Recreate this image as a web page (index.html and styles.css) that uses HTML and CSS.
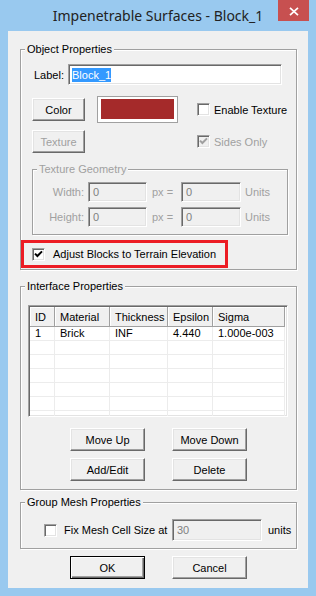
FILE: index.html
```html
<!DOCTYPE html>
<html>
<head>
<meta charset="utf-8">
<title>Impenetrable Surfaces - Block_1</title>
<link rel="stylesheet" href="styles.css">
</head>
<body>
<div class="window">
  <div class="titlebar">
    <span></span>
    <div class="title">Impenetrable Surfaces - Block_1</div>
    <div class="close"><svg width="10" height="9" viewBox="0 0 10 9"><path d="M1 0.8L9 8.2M9 0.8L1 8.2" stroke="#fff" stroke-width="1.7" fill="none"/></svg></div>
  </div>
  <div class="client">
    <div class="group g-object">
      <div class="group-title">Object Properties</div>
      <div class="label-row">
        <span>Label:</span>
        <div class="input input-label"><span class="sel">Block_1</span></div>
      </div>
      <div class="color-grid">
        <button class="btn btn-small">Color</button>
        <div class="swatch"><div class="swatch-fill"></div></div>
        <div class="check check-tex"><span class="box"></span><span>Enable Texture</span></div>
        <button class="btn btn-small disabled">Texture</button>
        <span></span>
        <div class="check check-tex disabled"><span class="box checked"><svg width="9" height="9" viewBox="0 0 9 9"><path d="M1 3.6L3.4 6L8 1.4" stroke="#a0a0a0" stroke-width="2" fill="none"/></svg></span><span>Sides Only</span></div>
      </div>
      <div class="group g-texture disabled">
        <div class="group-title">Texture Geometry</div>
        <div class="geo-grid">
          <span class="geo-label">Width:</span>
          <div class="input dis">0</div>
          <span class="px">px =</span>
          <div class="input dis">0</div>
          <span>Units</span>
          <span class="geo-label">Height:</span>
          <div class="input dis">0</div>
          <span class="px">px =</span>
          <div class="input dis">0</div>
          <span>Units</span>
        </div>
      </div>
      <div class="highlight">
        <span class="box checked"><svg width="9" height="9" viewBox="0 0 9 9"><path d="M1 3.6L3.4 6L8 1.4" stroke="#000" stroke-width="2" fill="none"/></svg></span>
        <span class="adjust-text">Adjust Blocks to Terrain Elevation</span>
      </div>
    </div>

    <div class="group g-interface">
      <div class="group-title">Interface Properties</div>
      <div class="list">
        <table class="grid">
          <colgroup><col class="c1"><col class="c2"><col class="c3"><col class="c4"><col class="c5"></colgroup>
          <thead>
            <tr><th>ID</th><th>Material</th><th>Thickness</th><th>Epsilon</th><th>Sigma</th></tr>
          </thead>
          <tbody>
            <tr><td>1</td><td>Brick</td><td>INF</td><td>4.440</td><td>1.000e-003</td></tr>
            <tr><td></td><td></td><td></td><td></td><td></td></tr>
            <tr><td></td><td></td><td></td><td></td><td></td></tr>
            <tr><td></td><td></td><td></td><td></td><td></td></tr>
            <tr><td></td><td></td><td></td><td></td><td></td></tr>
            <tr><td></td><td></td><td></td><td></td><td></td></tr>
            <tr><td></td><td></td><td></td><td></td><td></td></tr>
          </tbody>
        </table>
      </div>
      <div class="btn-grid">
        <button class="btn">Move Up</button>
        <button class="btn">Move Down</button>
        <button class="btn">Add/Edit</button>
        <button class="btn">Delete</button>
      </div>
    </div>

    <div class="group g-mesh">
      <div class="group-title">Group Mesh Properties</div>
      <div class="mesh-row">
        <span class="box"></span>
        <span class="mesh-text">Fix Mesh Cell Size at</span>
        <div class="input dis mesh-input">30</div>
        <span class="units">units</span>
      </div>
    </div>

    <div class="footer">
      <button class="btn btn-default">OK</button>
      <button class="btn">Cancel</button>
    </div>
  </div>
</div>
</body>
</html>
```

FILE: styles.css
```css
* { box-sizing: border-box; }
html, body { margin: 0; padding: 0; }
body {
  width: 316px;
  height: 596px;
  overflow: hidden;
  font-family: "Liberation Sans", Arial, sans-serif;
  font-size: 11px;
  color: #000;
}
.window {
  width: 316px;
  height: 596px;
  background: #99c9ef;
  display: flex;
  flex-direction: column;
}
.titlebar {
  flex: none;
  height: 31px;
  display: grid;
  grid-template-columns: 1fr auto 1fr;
}
.title {
  font-family: "Noto Sans", sans-serif;
  font-size: 14px;
  line-height: 31px;
  color: #222;
  white-space: nowrap;
}
.close {
  justify-self: end;
  align-self: start;
  margin-right: 7px;
  width: 31px;
  height: 21px;
  background: #c75050;
  display: flex;
  align-items: center;
  justify-content: center;
  padding-top: 2px;
}
.client {
  flex: 1;
  margin: 0 8px 8px;
  background: #f0f0f0;
  padding: 0 11px 0 12px;
  display: flex;
  flex-direction: column;
}
.group {
  border: 1px solid #a0a0a0;
  box-shadow: inset 1px 1px #fff, 1px 1px 0 #fff;
}
.group-title {
  width: fit-content;
  margin: -8px 0 0 4px;
  padding: 0 2px;
  height: 14px;
  line-height: 14px;
  background: #f0f0f0;
  white-space: nowrap;
}
.disabled, .disabled .group-title { color: #a0a0a0; }

.g-object { margin-top: 18px; height: 221px; }
.label-row {
  display: flex;
  align-items: center;
  gap: 4px;
  margin: 8px 0 0 13px;
}
.input {
  height: 21px;
  border: 1px solid;
  border-color: #a0a0a0 #fff #fff #a0a0a0;
  box-shadow: inset 1px 1px #696969, inset -1px -1px #e3e3e3;
  background: #fff;
  display: flex;
  align-items: center;
  padding-left: 4px;
  white-space: nowrap;
}
.input.dis { background: #f0f0f0; color: #808080; }
.input-label { width: 214px; padding-left: 3px; }
.sel { background: #3399ff; color: #fff; line-height: 14px; }

.color-grid {
  display: grid;
  grid-template-columns: 53px 81px auto;
  grid-template-rows: 27px 23px;
  column-gap: 12px;
  row-gap: 7px;
  align-items: center;
  margin: 11px 0 0 11px;
}
.btn {
  width: 75px;
  height: 23px;
  margin: 0;
  padding: 0;
  font: inherit;
  color: #000;
  background: #f0f0f0;
  border: 1px solid;
  border-color: #fff #696969 #696969 #fff;
  box-shadow: inset -1px -1px #a0a0a0, inset 1px 1px #e3e3e3;
  display: flex;
  align-items: center;
  justify-content: center;
}
.btn.btn-small { width: 53px; }
.btn.disabled { color: #a0a0a0; }
.btn-default {
  border-color: #000;
  box-shadow: inset 1px 1px #fff, inset -1px -1px #696969, inset -2px -2px #a0a0a0;
}
.swatch {
  width: 81px;
  height: 27px;
  border: 1px solid #a0a0a0;
  background: #fff;
  padding: 2px 3px 3px;
}
.swatch-fill { width: 100%; height: 100%; background: #a52a2a; }

.check {
  display: flex;
  align-items: center;
  gap: 4px;
  white-space: nowrap;
}
.check-tex { margin-left: 7px; }
.box {
  flex: none;
  width: 13px;
  height: 13px;
  border: 1px solid;
  border-color: #a0a0a0 #fff #fff #a0a0a0;
  box-shadow: inset 1px 1px #696969, inset -1px -1px #e3e3e3;
  background: #fff;
  display: flex;
  align-items: center;
  justify-content: center;
}
.disabled .box { background: #f0f0f0; }
.box svg { display: block; }

.g-texture {
  margin: 16px 0 0 11px;
  width: 256px;
  height: 66px;
}
.geo-grid {
  display: grid;
  grid-template-columns: 51px 59px 26px 60px auto;
  grid-auto-rows: 20px;
  column-gap: 4px;
  row-gap: 5px;
  align-items: center;
  margin-top: 6px;
}
.geo-grid .input { height: 20px; }
.geo-label { justify-self: end; }
.px { padding-left: 1px; white-space: nowrap; }

.highlight {
  margin-top: 5px;
  width: 207px;
  height: 28px;
  border: 3px solid #ec1c24;
  display: flex;
  align-items: center;
  padding-left: 8px;
}
.adjust-text { margin-left: 8px; white-space: nowrap; }

.g-interface { margin-top: 16px; height: 204px; }
.list {
  margin: 12px 0 0 7px;
  width: 260px;
  height: 112px;
  border: 1px solid;
  border-color: #a0a0a0 #fff #fff #a0a0a0;
  box-shadow: inset 1px 1px #696969, inset -1px -1px #e3e3e3;
  background: #fff;
  padding: 1px;
  overflow: hidden;
}
.grid {
  table-layout: fixed;
  border-collapse: separate;
  border-spacing: 0;
  width: 255px;
}
.c1 { width: 25px; }
.c2 { width: 55px; }
.c3 { width: 58px; }
.c4 { width: 45px; }
.c5 { width: 72px; }
.grid th {
  height: 20px;
  padding: 0 0 0 5px;
  text-align: left;
  font-weight: normal;
  background: #f0f0f0;
  border-right: 1px solid #a0a0a0;
  border-bottom: 1px solid #a0a0a0;
  box-shadow: inset 1px 1px #fff;
  white-space: nowrap;
  overflow: hidden;
}
.grid td {
  height: 14px;
  padding: 0 0 0 5px;
  line-height: 13px;
  border-right: 1px solid #ececec;
  border-bottom: 1px solid #ececec;
  white-space: nowrap;
  overflow: hidden;
}
.btn-grid {
  display: grid;
  grid-template-columns: 75px 75px;
  column-gap: 27px;
  row-gap: 7px;
  justify-content: center;
  margin-top: 11px;
}

.g-mesh { margin-top: 12px; height: 47px; }
.mesh-row {
  display: flex;
  align-items: center;
  margin: 10px 0 0 23px;
}
.mesh-text { width: 115px; padding-left: 7px; white-space: nowrap; }
.mesh-input { width: 90px; height: 22px; }
.units { margin-left: 6px; }

.footer {
  display: flex;
  justify-content: center;
  gap: 27px;
  margin-top: 7px;
}
```
